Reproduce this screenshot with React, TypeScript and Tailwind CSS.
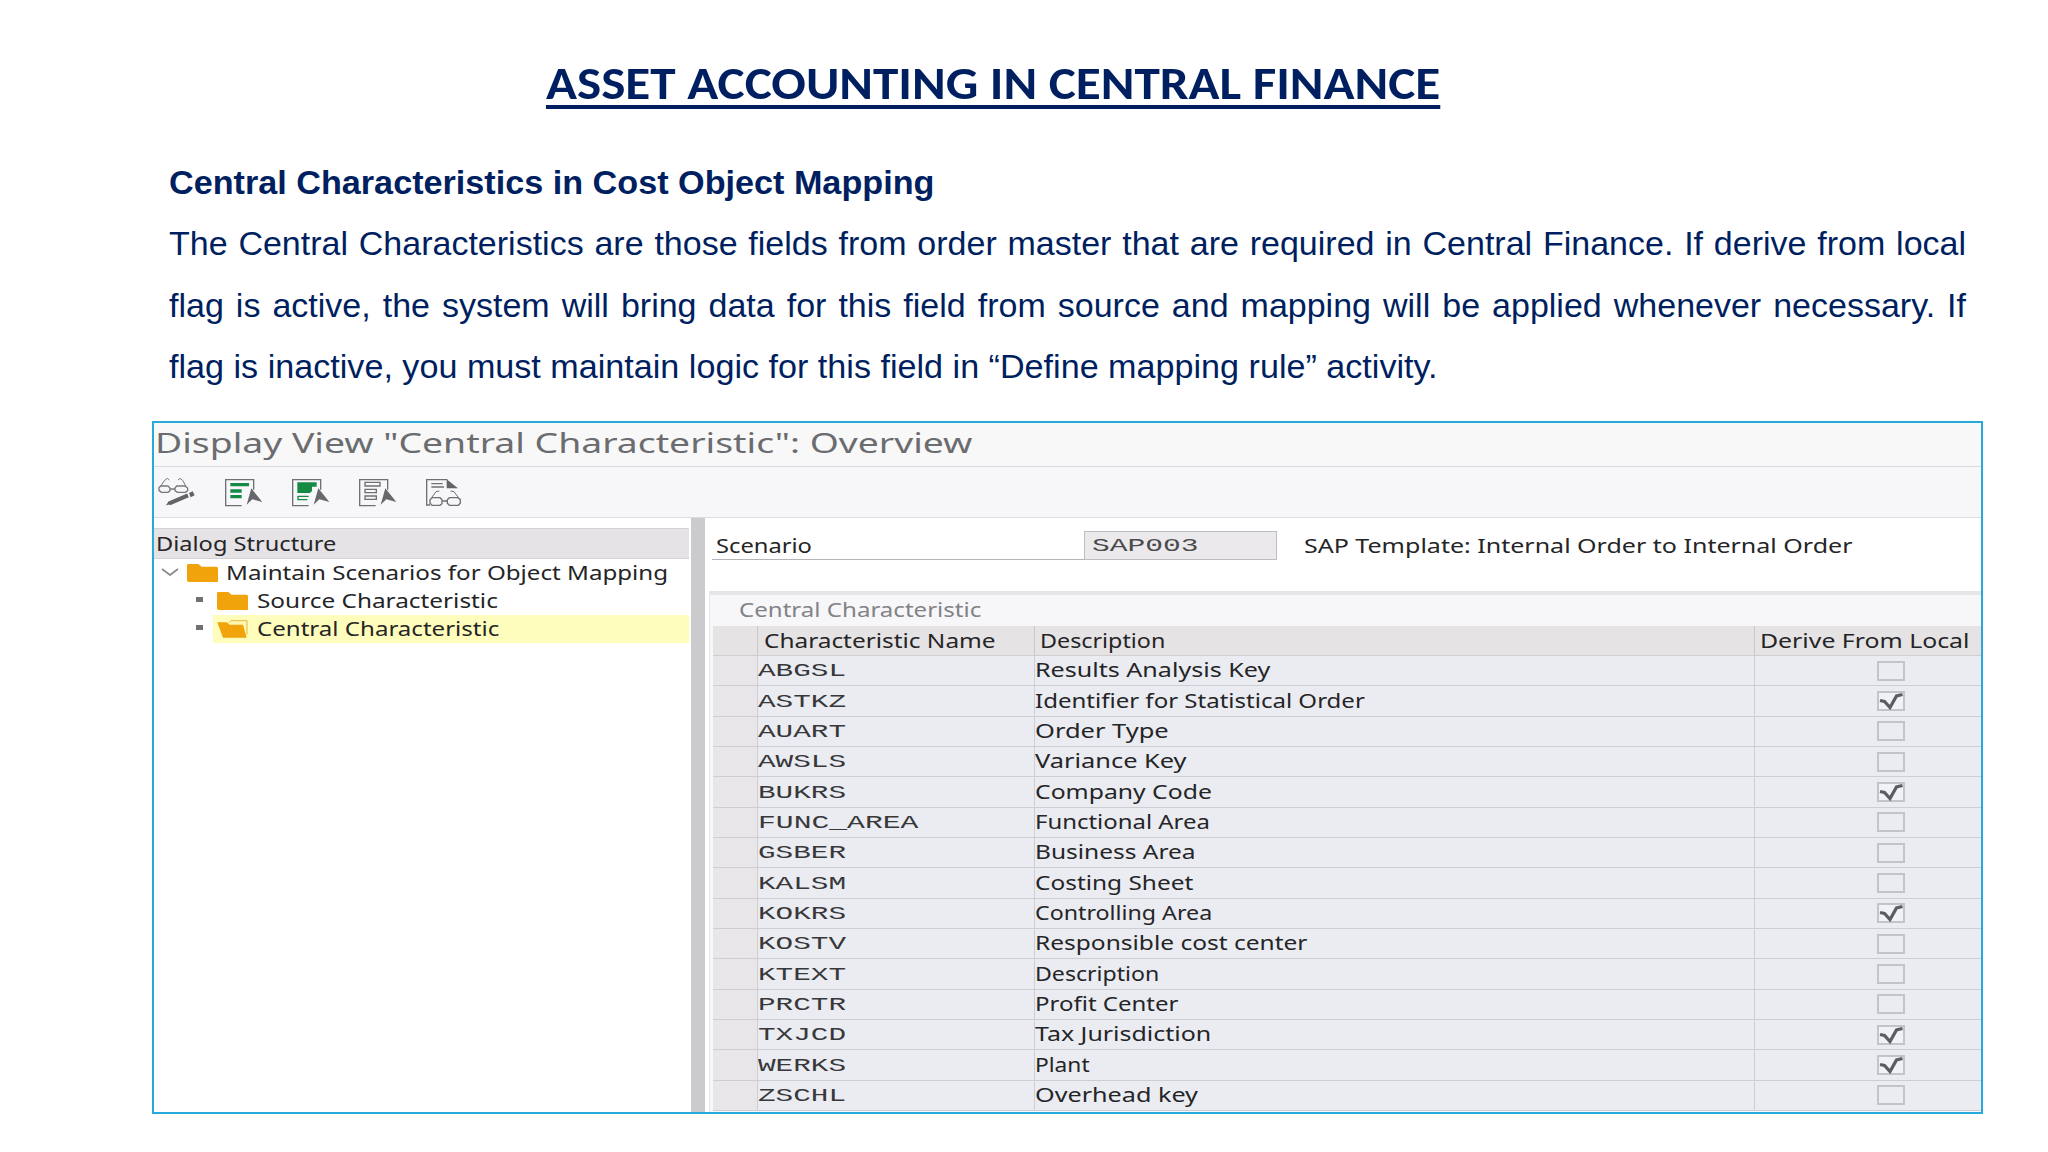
import React, { useLayoutEffect, useRef, useState } from 'react';
import clsx from 'clsx';

interface FitProps {
  w: number;
  className?: string;
  children: string;
}

// Text stretched horizontally to a given width
const Fit: React.FC<FitProps> = ({ w, className, children }) => {
  const ref = useRef<HTMLSpanElement>(null);
  const [scale, setScale] = useState(1);

  useLayoutEffect(() => {
    if (ref.current) setScale(w / ref.current.offsetWidth);
  }, [w]);

  return (
    <span
      ref={ref}
      className={clsx('inline-block shrink-0 origin-left whitespace-nowrap', className)}
      style={{ transform: `scaleX(${scale})` }}
    >
      {children}
    </span>
  );
};

const rows = [
  { name: 'ABGSL', nameW: 88, description: 'Results Analysis Key', descW: 235, derive: false },
  { name: 'ASTKZ', nameW: 88, description: 'Identifier for Statistical Order', descW: 330, derive: true },
  { name: 'AUART', nameW: 88, description: 'Order Type', descW: 134, derive: false },
  { name: 'AWSLS', nameW: 88, description: 'Variance Key', descW: 151, derive: false },
  { name: 'BUKRS', nameW: 88, description: 'Company Code', descW: 177, derive: true },
  { name: 'FUNC_AREA', nameW: 160, description: 'Functional Area', descW: 175, derive: false },
  { name: 'GSBER', nameW: 88, description: 'Business Area', descW: 161, derive: false },
  { name: 'KALSM', nameW: 88, description: 'Costing Sheet', descW: 158, derive: false },
  { name: 'KOKRS', nameW: 88, description: 'Controlling Area', descW: 177, derive: true },
  { name: 'KOSTV', nameW: 88, description: 'Responsible cost center', descW: 272, derive: false },
  { name: 'KTEXT', nameW: 88, description: 'Description', descW: 124, derive: false },
  { name: 'PRCTR', nameW: 88, description: 'Profit Center', descW: 144, derive: false },
  { name: 'TXJCD', nameW: 88, description: 'Tax Jurisdiction', descW: 176, derive: true },
  { name: 'WERKS', nameW: 88, description: 'Plant', descW: 55, derive: true },
  { name: 'ZSCHL', nameW: 88, description: 'Overhead key', descW: 163, derive: false },
];

const cols = 'grid grid-cols-[45px_277px_720px_1fr]';

const Cursor = () => <path d="M79 34 65 83 82 67 112 75Z" fill="#67686b" />;

const PageOutline = () => <path d="M50 86H2V8H86V38" fill="none" stroke="#6f7073" strokeWidth="4" />;

const GlassesPencil = () => (
  <svg viewBox="0 0 114 90" className="h-[30px] w-[38px]" fill="none" stroke="#77787b" strokeWidth="4">
    <path d="M8 28 20 10 28 4 34 9M84 28 74 10 66 4 60 9" strokeWidth="3" />
    <path d="M8 27H30L36 33V41L30 46H10L3 40V32ZM56 27H80L89 33V41L82 46H58L51 41V33ZM36 36H51" />
    <path d="M34 79 90 55" stroke="#626366" strokeWidth="12" />
    <path d="M24 85 32 73 40 82ZM93 48 104 43 110 55 98 61Z" fill="#626366" stroke="none" />
  </svg>
);

const SelectEntries = () => (
  <svg viewBox="0 0 114 90" className="h-[30px] w-[38px]">
    <PageOutline />
    <path d="M16 18H72V28H16ZM16 37H50V47H16ZM16 54H50V64H16Z" fill="#158a45" />
    <Cursor />
  </svg>
);

const SelectBlock = () => (
  <svg viewBox="0 0 114 90" className="h-[30px] w-[38px]">
    <PageOutline />
    <path d="M16 16H74V29H60V42L54 48H16Z" fill="#158a45" />
    <path d="M50 58H18V68H46" fill="none" stroke="#158a45" strokeWidth="4" />
    <Cursor />
  </svg>
);

const DeselectEntries = () => (
  <svg viewBox="0 0 114 90" className="h-[30px] w-[38px]">
    <PageOutline />
    <path d="M18 16H63V27H18ZM18 37H52V47H18ZM18 57H52V67H18Z" fill="none" stroke="#6f7073" strokeWidth="4" />
    <Cursor />
  </svg>
);

const PageGlasses = () => (
  <svg viewBox="0 0 114 90" className="h-[30px] w-[38px]" fill="none" stroke="#6f7073" strokeWidth="4">
    <path d="M12 84H2V8H64M16 20H50M16 30H54" />
    <path d="M62 7 96 34H62Z" fill="#626366" stroke="none" />
    <path d="M18 60 30 44 40 42M96 60 84 44 74 42" strokeWidth="3" />
    <path d="M18 62H42L48 68V80L42 85H18L12 79V68ZM70 62H96L103 68V79L97 85H70L64 79V68ZM48 72H64" />
  </svg>
);

const Folder = () => (
  <svg viewBox="0 0 93 54" className="h-[18px] w-[31px] shrink-0">
    <path d="M0 3Q0 0 4 0H34L44 8H88Q93 8 93 13V54H6Q0 54 0 49Z" fill="#f0a30a" />
  </svg>
);

const FolderOpen = () => (
  <svg viewBox="0 0 93 54" className="h-[18px] w-[31px] shrink-0">
    <path d="M36 8 42 2H90V44" fill="#fff6b0" stroke="#e8b93c" strokeWidth="3" />
    <path d="M1 7H30L38 14H78L89 53H18Z" fill="#f0a30a" />
  </svg>
);

const Checkbox: React.FC<{ checked: boolean }> = ({ checked }) => (
  <svg viewBox="0 0 28 20" className="h-5 w-7" fill="none">
    <rect x="1" y="1" width="26" height="18" fill={checked ? '#f1f2f5' : '#eaecf0'} stroke="#c3c4c8" strokeWidth="2" />
    {checked && <path d="M3 9.5 7.5 10.5 13 16.5 19.5 5 25.5 3.5" stroke="#5c5d61" strokeWidth="3.2" />}
  </svg>
);

const Bullet = () => <span className="-mt-[3px] h-[5px] w-[7px] shrink-0 bg-[#707175]" />;

const DialogTree = () => (
  <div className="w-[535px] shrink-0 pt-[10px]">
    <div className="flex h-[31px] items-center border-y border-[#d3d2d5] bg-[#e5e3e6] pl-[2px] pt-[2px]">
      <Fit w={180}>Dialog Structure</Fit>
    </div>
    <div className="flex h-[28px] items-center pl-[7px]">
      <svg viewBox="0 0 18 8" className="-mt-[3px] h-2 w-[18px]" fill="none" stroke="#8a8b8e" strokeWidth="1.8">
        <path d="M1 1 9 7 17 1" />
      </svg>
      <div className="ml-2 flex items-center gap-[8px]">
        <Folder />
        <Fit w={442}>Maintain Scenarios for Object Mapping</Fit>
      </div>
    </div>
    <div className="flex h-[28px] items-center pl-[42px]">
      <Bullet />
      <div className="ml-[14px] flex items-center gap-[9px]">
        <Folder />
        <Fit w={241}>Source Characteristic</Fit>
      </div>
    </div>
    <div className="flex h-[28px] items-center pl-[42px]">
      <Bullet />
      <div className="ml-[10px] flex h-full flex-1 items-center gap-[9px] bg-[#fffdbb] pl-1">
        <FolderOpen />
        <Fit w={242}>Central Characteristic</Fit>
      </div>
    </div>
  </div>
);

const CharacteristicTable = () => (
  <div className="ml-[4px] flex-1 border-l border-t-4 border-[#e6e5e8] bg-[#f7f6f9] pl-[3px]">
    <div className="flex h-[31px] items-center pl-[26px] text-[#828386]">
      <Fit w={242}>Central Characteristic</Fit>
    </div>
    <div className={clsx(cols, 'h-[30px] items-center border-b border-[#cfced1] bg-[#e5e3e4]')}>
      <span className="h-full border-r border-[#c9c8cb]" />
      <span className="flex h-full items-center border-r border-[#c9c8cb] pl-[6px] pt-[2px]">
        <Fit w={231}>Characteristic Name</Fit>
      </span>
      <span className="flex h-full items-center border-r border-[#c9c8cb] pl-[5px] pt-[2px]">
        <Fit w={125}>Description</Fit>
      </span>
      <span className="flex h-full items-center pl-[5px] pt-[2px]">
        <Fit w={209}>Derive From Local</Fit>
      </span>
    </div>
    {rows.map((row) => (
      <div key={row.name} className={clsx(cols, 'h-[30.35px] bg-[#eaecf1]')}>
        <span className="border-b border-r border-[#cdced1] bg-[#e8e6e9]" />
        <span className="flex items-center border-b border-r border-[#cdced1] pt-px text-[#38383b]">
          <Fit w={row.nameW} className="font-['Liberation_Mono',monospace] text-[18px]">{row.name}</Fit>
        </span>
        <span className="flex items-center border-b border-r border-[#cdced1]">
          <Fit w={row.descW}>{row.description}</Fit>
        </span>
        <span className="flex items-center border-b border-[#cdced1] pl-[122px]">
          <Checkbox checked={row.derive} />
        </span>
      </div>
    ))}
  </div>
);

const SapWindow = () => (
  <section className="ml-[152px] mt-[17px] flex h-[693px] w-[1831px] flex-col overflow-hidden border-2 border-[#27a9dc] bg-white font-['Noto_Sans',sans-serif] text-[19px] leading-none text-[#252527]">
    <div className="flex h-[44px] shrink-0 items-center border-b border-[#dddce0] bg-[#f8f8f9] pb-[5px] pl-[1px] text-[27px] text-[#6b6c6f]">
      <Fit w={818}>Display View "Central Characteristic": Overview</Fit>
    </div>
    <div className="flex h-[51px] shrink-0 items-center gap-[29px] border-b border-[#dddce0] bg-[#f7f6f9] pl-[4px]">
      <GlassesPencil />
      <SelectEntries />
      <SelectBlock />
      <DeselectEntries />
      <PageGlasses />
    </div>
    <div className="flex flex-1">
      <DialogTree />
      <div className="ml-[2px] w-[14px] shrink-0 bg-[#cbcacc]" />
      <div className="flex flex-1 flex-col">
        <div className="ml-[7px] mt-[13px] flex h-[29px]">
          <div className="flex w-[372px] items-center border-b border-[#b5b4b7] pl-[4px] pt-[2px]">
            <Fit w={96}>Scenario</Fit>
          </div>
          <div className="flex w-[193px] items-center border border-[#bdbcc0] bg-[#ebe9eb] pl-[7px] pt-px text-[#4a4a4d]">
            <Fit w={106} className="font-['Liberation_Mono',monospace] text-[19px]">SAP003</Fit>
          </div>
          <div className="flex items-center pl-[27px] pt-px">
            <Fit w={549}>SAP Template: Internal Order to Internal Order</Fit>
          </div>
        </div>
        <div className="mt-[31px] flex flex-1">
          <CharacteristicTable />
        </div>
      </div>
    </div>
  </section>
);

const App: React.FC = () => {
  return (
    <main className="h-[1152px] w-[2048px] overflow-hidden bg-white text-[#001f60]">
      <h1 className="ml-[546px] h-[152px] pt-[51px] font-['Carlito','Lato',sans-serif] text-[46px] font-bold leading-[64px]">
        <Fit w={894} className="underline decoration-[4px] underline-offset-[6px]">
          ASSET ACCOUNTING IN CENTRAL FINANCE
        </Fit>
      </h1>
      <div className="ml-[169px] flex h-[252px] w-[1797px] flex-col font-['Liberation_Sans',Arial,sans-serif] text-[34px] leading-[61.4px]">
        <h2 className="font-bold">
          <Fit w={765}>Central Characteristics in Cost Object Mapping</Fit>
        </h2>
        <p className="whitespace-nowrap [text-align-last:justify]">
          The Central Characteristics are those fields from order master that are required in Central Finance. If derive from local
        </p>
        <p className="whitespace-nowrap [text-align-last:justify]">
          flag is active, the system will bring data for this field from source and mapping will be applied whenever necessary. If
        </p>
        <p>
          <Fit w={1269}>flag is inactive, you must maintain logic for this field in “Define mapping rule” activity.</Fit>
        </p>
      </div>
      <SapWindow />
    </main>
  );
};

export default App;
